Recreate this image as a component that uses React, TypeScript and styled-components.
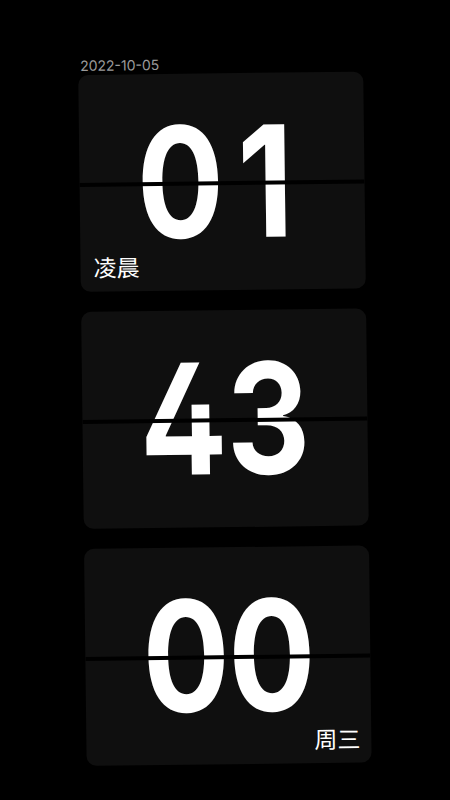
import React from 'react';
import styled, { createGlobalStyle } from 'styled-components';

const GlobalStyle = createGlobalStyle`
  html, body {
    margin: 0;
    padding: 0;
    background: #000;
  }
  body {
    width: 450px;
    height: 800px;
    overflow: hidden;
    font-family: Inter, "Noto Sans", "Noto Sans CJK SC", sans-serif;
  }
`;

const Page = styled.div`
  display: flex;
  flex-direction: column;
  align-items: flex-start;
  width: 450px;
  height: 800px;
  padding: 57px 0 0 78px;
  box-sizing: border-box;
  background: #000;
`;

const Stack = styled.div`
  display: flex;
  flex-direction: column;
  gap: 20px;
  width: 285px;
  transform: rotate(-0.7deg);
  transform-origin: 0 0;
`;

const DateLine = styled.div`
  font-family: Inter, "Noto Sans", sans-serif;
  font-size: 14px;
  line-height: 17px;
  color: #9a9a9a;
  padding-left: 2px;
  margin-bottom: -19px;
`;

const Card = styled.div`
  position: relative;
  display: flex;
  align-items: center;
  justify-content: center;
  height: 217px;
  border-radius: 10px;
  background: #0f0f0f;
  overflow: hidden;
`;

const Digits = styled.div`
  display: flex;
  transform: scaleX(0.84);
`;

const Digit = styled.span`
  width: 102px;
  text-align: center;
  font-family: Inter, Roboto, sans-serif;
  font-feature-settings: 'cv02' 1;
  font-weight: 700;
  font-size: 154px;
  line-height: 0.8;
  color: #fff;
`;

const Split = styled.div`
  position: absolute;
  left: 0;
  right: 0;
  top: 50%;
  height: 4px;
  margin-top: -1px;
  background: #000;
`;

const Tag = styled.span<{ $side: 'left' | 'right' }>`
  position: absolute;
  bottom: 11px;
  ${p => (p.$side === 'left' ? 'left: 13px;' : 'right: 11px;')}
  font-family: "Noto Sans CJK SC", "Noto Sans", sans-serif;
  font-size: 23px;
  line-height: 28px;
  color: #fff;
`;

interface FlipProps {
  value: string;
  tag?: string;
  side?: 'left' | 'right';
}

const FlipCard: React.FC<FlipProps> = ({ value, tag, side = 'left' }) => (
  <Card>
    <Digits>
      {value.split('').map((d, i) => (
        <Digit key={i}>{d}</Digit>
      ))}
    </Digits>
    <Split />
    {tag && <Tag $side={side}>{tag}</Tag>}
  </Card>
);

const App: React.FC = () => (
  <>
    <GlobalStyle />
    <Page>
      <Stack>
        <DateLine>2022-10-05</DateLine>
        <FlipCard value="01" tag="凌晨" side="left" />
        <FlipCard value="43" />
        <FlipCard value="00" tag="周三" side="right" />
      </Stack>
    </Page>
  </>
);

export default App;
